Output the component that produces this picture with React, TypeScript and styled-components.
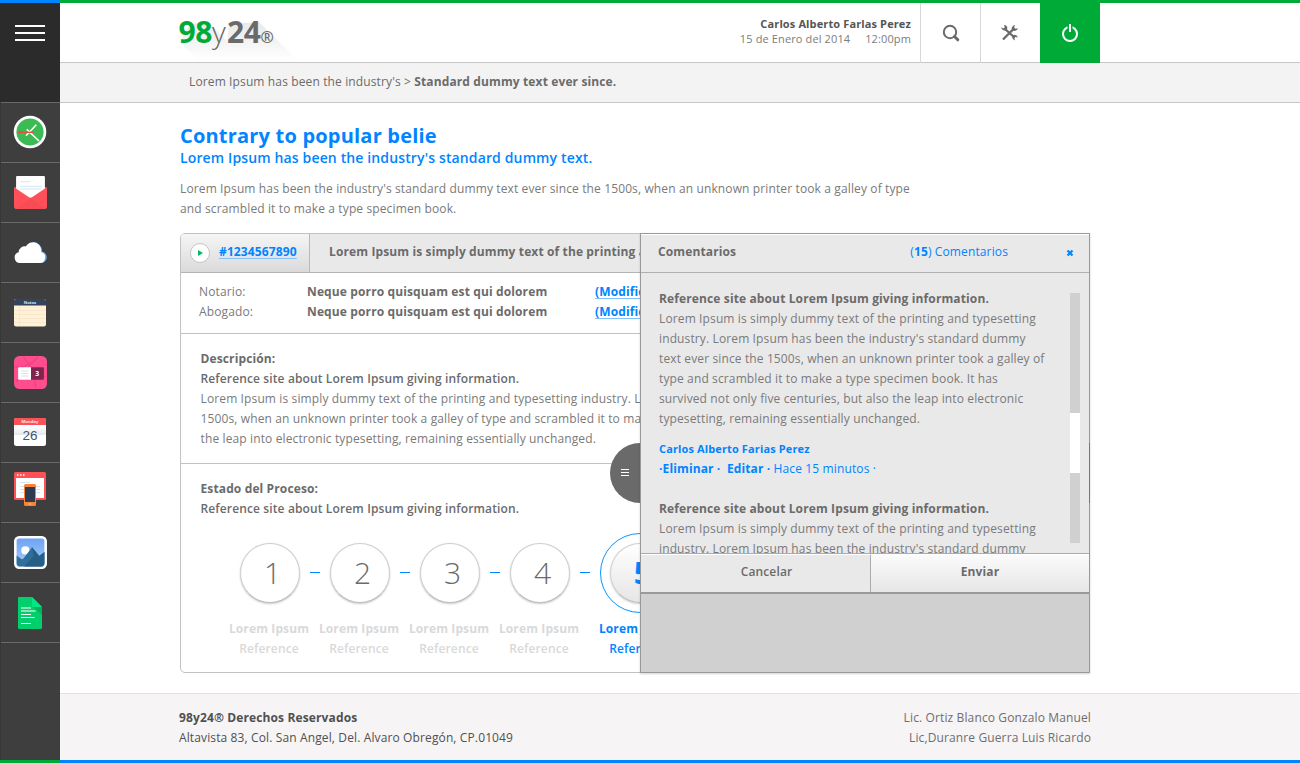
import React from "react";
import styled, { createGlobalStyle, css } from "styled-components";

const Global = createGlobalStyle`
  * { box-sizing: border-box; }
  body { margin: 0; font-family: "Open Sans", sans-serif; font-size: 12px; line-height: 20px; letter-spacing: 0.125px; color: #6b6b6b; background: #fff; }
  a { color: inherit; text-decoration: none; }
  h1, h2, p { margin: 0; }
`;

const blue = "#0084ff";
const green = "#00aa37";

const Shell = styled.div`
  display: flex;
  width: 1300px;
  height: 763px;
  overflow: hidden;
`;

const Sidebar = styled.nav`
  display: flex;
  flex-direction: column;
  flex: none;
  width: 60px;
  background: #3e3e3e;
  border-top: 3px solid ${blue};
  border-bottom: 3px solid ${green};
`;

const MenuButton = styled.button`
  display: flex;
  flex-direction: column;
  gap: 5px;
  height: 99px;
  padding: 22px 15px 0;
  border: 0;
  background: #2b2b2b;
`;

const MenuBar = styled.span`
  height: 2px;
  background: #fff;
`;

const SideItems = styled.div`
  display: flex;
  flex-direction: column;
  flex: 1;
  border-left: 1px solid #373737;
`;

const SideItem = styled.a<{ $top: number; $wide?: boolean }>`
  display: flex;
  align-items: flex-start;
  justify-content: center;
  height: 60px;
  padding: ${(p) => p.$top}px ${(p) => (p.$wide ? 0 : 1)}px 0 0;
  border-top: 1px solid #6a6a6a;
`;

const SideEnd = styled.span`
  height: 1px;
  background: #6a6a6a;
`;

const Page = styled.div`
  display: flex;
  flex-direction: column;
  flex: 1;
  border-top: 3px solid ${green};
  border-bottom: 3px solid ${blue};
`;

const TopBar = styled.header`
  display: flex;
  height: 60px;
  padding-left: 119px;
  border-bottom: 1px solid #c6c6c6;
`;

const Logo = styled.div`
  position: relative;
  display: flex;
  align-items: baseline;
  width: 240px;
  padding-top: 8px;
  font-size: 30px;
  line-height: 42px;
  font-weight: 700;
  letter-spacing: -0.4px;
  color: #6a6a6a;
  white-space: nowrap;
`;

const LogoShadow = styled.svg`
  position: absolute;
  left: 0;
  top: 0;
`;

const LogoText = styled.span<{ $kind?: "green" | "light" | "mark" }>`
  position: relative;
  ${(p) => p.$kind === "green" && css`margin-left: -0.5px; color: ${green};`}
  ${(p) => p.$kind === "light" && css`font-weight: 300; letter-spacing: 1.2px;`}
  ${(p) => p.$kind === "mark" && css`font-size: 16px; line-height: 20px; letter-spacing: 0; font-weight: 600;`}
`;

const User = styled.div`
  flex: none;
  width: 501px;
  padding: 13px 9px 0 0;
  text-align: right;
  font-size: 11px;
  line-height: 15px;
  color: #7c7c7c;
  white-space: pre;
`;

const UserName = styled.div`
  font-weight: 700;
  color: #555;
`;

const ToolButton = styled.button<{ $active?: boolean }>`
  display: flex;
  align-items: center;
  justify-content: center;
  width: 60px;
  height: 60px;
  padding: 0;
  border: 0;
  border-left: ${(p) => (p.$active ? "0" : "1px solid #d8d8d8")};
  background: ${(p) => (p.$active ? green : "transparent")};
`;

const Crumbs = styled.div`
  height: 40px;
  padding: 9px 0 0 129px;
  background: #f3f3f3;
  border-bottom: 1px solid #c6c6c6;
`;

const Main = styled.main`
  flex: 1;
  padding: 20px 0 0 120px;
`;

const Title = styled.h1`
  font-size: 20px;
  line-height: 26px;
  font-weight: 700;
  letter-spacing: 0.2px;
  color: ${blue};
`;

const Subtitle = styled.h2`
  font-size: 14px;
  line-height: 18px;
  font-weight: 600;
  letter-spacing: 0.135px;
  color: ${blue};
`;

const Intro = styled.p`
  margin-top: 12px;
  width: 760px;
  color: #7a7a7a;
`;

const Card = styled.section`
  position: relative;
  width: 910px;
  height: 440px;
  margin-top: 14px;
  border: 1px solid #c2c2c2;
  border-radius: 5px;
  white-space: nowrap;
`;

const CardHead = styled.div`
  display: flex;
  height: 39px;
  border-bottom: 1px solid #b5b5b5;
  background: #e9e9e9;
  border-radius: 4px 0 0 0;
  font-weight: 700;
`;

const Folio = styled.div`
  display: flex;
  gap: 9px;
  width: 129px;
  padding: 8px 0 0 9px;
  border-right: 1px solid #b9b9b9;
  border-radius: 4px 0 0 0;
  background: linear-gradient(#f5f5f5, #dadada);
`;

const Play = styled.span`
  display: flex;
  align-items: center;
  justify-content: center;
  width: 20px;
  height: 20px;
  margin-top: 1px;
  border: 1px solid #c4c4c4;
  border-radius: 50%;
  background: #fff;
`;

const Link = styled.a`
  color: ${blue};
  font-weight: 700;
  text-decoration: underline 1px #80c1ff;
  text-underline-offset: 2px;
  text-decoration-skip-ink: none;
`;

const CardTitle = styled.div`
  padding: 8px 0 0 19px;
`;

const People = styled.div`
  display: grid;
  grid-template-columns: 108px 288px auto;
  grid-auto-rows: 20px;
  height: 61px;
  padding: 9px 0 0 18px;
  border-bottom: 1px solid #c2c2c2;
  color: #7a7a7a;
`;

const Strong = styled.strong<{ $semi?: boolean }>`
  font-weight: ${(p) => (p.$semi ? 600 : 700)};
  color: #6b6b6b;
`;

const Block = styled.div`
  height: 130px;
  padding: 15px 0 0 19.5px;
  border-bottom: 1px solid #c2c2c2;
  color: #7a7a7a;
`;

const Process = styled.div`
  padding: 15px 0 0 19.5px;
`;

const Steps = styled.div`
  display: flex;
  padding: 14px 0 0 39.5px;
`;

const Step = styled.div<{ $active?: boolean }>`
  display: flex;
  flex-direction: column;
  align-items: center;
  width: ${(p) => (p.$active ? 80 : 60)}px;
  color: ${(p) => (p.$active ? blue : "#d9d9d9")};
`;

const StepLabel = styled.span<{ $bold?: boolean }>`
  padding-right: 2px;
  font-weight: ${(p) => (p.$bold ? 700 : 600)};
`;

const Ring = styled.div<{ $active?: boolean }>`
  display: flex;
  align-items: center;
  justify-content: center;
  width: 80px;
  height: 80px;
  margin-bottom: 6px;
  border: 1px solid ${(p) => (p.$active ? "#0a95ff" : "transparent")};
  border-radius: 50%;
`;

const Disc = styled.div<{ $active?: boolean }>`
  width: 60px;
  height: 60px;
  padding-left: 5px;
  border: 1px solid #cfcfcf;
  border-bottom-color: #bdbdbd;
  border-radius: 50%;
  box-shadow: 0 1px 2px rgba(0, 0, 0, 0.22);
  background: ${(p) => (p.$active ? "linear-gradient(#fff, #e6e6e6)" : "#fff")};
  color: ${(p) => (p.$active ? blue : "#6b6b6b")};
  font-size: 30px;
  line-height: 58px;
  font-weight: ${(p) => (p.$active ? 700 : 300)};
  text-align: center;
`;

const Dash = styled.span`
  width: 10px;
  height: 1px;
  margin: 39px 10px 0;
  background: ${blue};
`;

const Handle = styled.div`
  position: absolute;
  left: 429px;
  top: 209px;
  display: flex;
  flex-direction: column;
  justify-content: center;
  gap: 1px;
  width: 60px;
  height: 60px;
  padding-left: 11px;
  border-radius: 50%;
  background: #6a6a6a;
`;

const HandleBar = styled.span`
  width: 8px;
  height: 1px;
  margin-bottom: 1px;
  background: #fff;
`;

const Panel = styled.aside`
  position: absolute;
  left: 459px;
  top: -1px;
  display: flex;
  flex-direction: column;
  width: 450px;
  height: 440px;
  border: 1px solid #999;
  background: #d0d0d0;
  box-shadow: 0 1px 2px rgba(0, 0, 0, 0.18);

  &::after {
    content: "";
    position: absolute;
    right: -1px;
    top: 209px;
    width: 1px;
    height: 60px;
    background: #777;
  }
`;

const PanelHead = styled.div`
  display: flex;
  align-items: flex-start;
  height: 39px;
  padding: 7px 15px 0 17px;
  border-top: 1px solid #fff;
  border-bottom: 1px solid #b0b0b0;
  background: #e9e9e9;
`;

const CloseIcon = styled.svg`
  margin-top: 7px;
`;

const Count = styled.span`
  margin-left: auto;
  margin-right: 58px;
  color: ${blue};
`;

const PanelBody = styled.div`
  display: flex;
  justify-content: space-between;
  height: 280px;
  padding: 16px 9px 0 18px;
  overflow: hidden;
  background: #e9e9e9;
  color: #7a7a7a;
`;

const Comment = styled.article`
  height: 210px;
`;

const Meta = styled.div`
  margin-top: 10px;
  color: ${blue};
  white-space: pre;
`;

const Author = styled.div`
  font-size: 11px;
  font-weight: 700;
`;

const Track = styled.div`
  width: 10px;
  height: 250px;
  margin-top: 4px;
  padding-top: 120px;
  background: #d0d0d0;
`;

const Thumb = styled.div`
  height: 60px;
  background: #fff;
`;

const Actions = styled.div`
  display: flex;
  height: 41px;
  border-top: 1px solid #ababab;
  border-bottom: 2px solid #9a9a9a;
`;

const Action = styled.button<{ $primary?: boolean }>`
  width: ${(p) => (p.$primary ? 219 : 229)}px;
  padding: 0 0 4px ${(p) => (p.$primary ? 0 : 22)}px;
  border: 0;
  border-top: 1px solid #fff;
  border-left: ${(p) => (p.$primary ? "1px solid #ababab" : "0")};
  background: ${(p) => (p.$primary ? "linear-gradient(#fbfbfb, #e6e6e6)" : "#e9e9e9")};
  color: #6b6b6b;
  font: ${(p) => (p.$primary ? 700 : 600)} 12px "Open Sans", sans-serif;
  letter-spacing: 0.125px;
`;

const Footer = styled.footer`
  display: flex;
  justify-content: space-between;
  height: 67px;
  padding: 14px 209px 0 119px;
  border-top: 1px solid #e2e2e2;
  background: #f6f4f5;
`;

const FooterSide = styled.div<{ $right?: boolean }>`
  text-align: ${(p) => (p.$right ? "right" : "left")};
  color: ${(p) => (p.$right ? "#6e6e6e" : "#505050")};
`;

const ClockIcon = () => (
  <svg width="34" height="34" viewBox="0 0 34 34">
    <circle cx="17" cy="17" r="16.3" fill="#fff" />
    <circle cx="17" cy="17" r="13.6" fill="#3cba54" />
    <path d="M13 20.700L23.300 9.700M13.700 14.300L26 26" stroke="#fff" strokeWidth="1.600" />
    <path d="M6 17.300H20.500" stroke="#e0523c" strokeWidth="1.400" />
    <circle cx="6.500" cy="17.300" r="1.600" fill="#e8503a" />
  </svg>
);

const MailIcon = () => (
  <svg width="35" height="35" viewBox="0 0 34 34">
    <path d="M1 12l5-1h23l4 1v18q0 3-3 3H4q-3 0-3-3z" fill="#e9404a" />
    <path d="M3 2q0-1 1-1h26q1 0 1 1v20H3z" fill="#fff" />
    <path d="M7 6.500h10M7 11h21M7 13.500h21" stroke="#d5e6f3" strokeWidth="1" />
    <path d="M1 12l16 10.500L33 12v18q0 3-3 3H4q-3 0-3-3z" fill="#ff5059" />
    <path d="M17 22.500L33 33H4z" fill="#f4454f" opacity=".5" />
  </svg>
);

const CloudIcon = () => (
  <svg width="34" height="24" viewBox="0 0 34 24">
    <path d="M20 1a9 9 0 0 1 9 9.500 5.800 5.800 0 0 1-1 11.500H14z" fill="#6aabf7" />
    <path d="M7 22a5.500 5.500 0 0 1-1.300-10.800A6 6 0 0 1 13.500 5.500 8.500 8.500 0 0 1 28 11 5.600 5.600 0 0 1 26.500 22z" fill="#fff" />
    <circle cx="20" cy="9.500" r="8.300" fill="#fff" />
  </svg>
);

const NotesIcon = () => (
  <svg width="34" height="30" viewBox="0 0 34 30">
    <rect x="1" y="1" width="32" height="27.500" rx="2" fill="#fff0d6" />
    <path d="M1 7V3q0-2 2-2h28q2 0 2 2v4z" fill="#34445f" />
    <path d="M1 7.500h32" stroke="#c98b5b" />
    <path d="M1 12.500h32M1 16.500h32M1 20.500h32M1 24.500h32M6.500 8v20" stroke="#f3e2c6" strokeWidth=".7" />
    <text x="17" y="5.600" fontSize="4.200" fontWeight="700" letterSpacing="0" textAnchor="middle" fill="#dfe5ee">Notes</text>
  </svg>
);

const BallIcon = () => (
  <svg width="35" height="35" viewBox="0 0 34 34">
    <rect x="1" y="1" width="32" height="32" rx="5" fill="#ff4d8d" />
    <path d="M2 12q15 0 22-10M10 2q12 12 12 30M3 26q12-12 29-5" fill="none" stroke="#ee4282" strokeWidth="1.200" />
    <rect x="5" y="12" width="13" height="12" rx="1" fill="#fff" />
    <path d="M8 15.500h7M8 18h7M8 20.500h7" stroke="#e0e0e0" />
    <path d="M17.500 12H29q1 0 1 1v10q0 1-1 1H17.500z" fill="#7d2450" />
    <text x="23.500" y="20.500" fontSize="6.500" fontWeight="700" letterSpacing="0" textAnchor="middle" fill="#fff">3</text>
  </svg>
);

const CalendarIcon = () => (
  <svg width="34" height="30" viewBox="0 0 34 30">
    <defs>
      <linearGradient id="cal" x2="0" y2="1">
        <stop offset="0" stopColor="#fff" />
        <stop offset=".3" stopColor="#fff" />
        <stop offset=".6" stopColor="#e6e8eb" />
        <stop offset=".62" stopColor="#fff" />
      </linearGradient>
    </defs>
    <rect x="1" y="1" width="32" height="28" rx="2.500" fill="url(#cal)" />
    <path d="M1 8V3q0-2 2-2h28q2 0 2 2v5z" fill="#fb5258" />
    <text x="17" y="6.200" fontSize="4.200" fontWeight="700" letterSpacing="0" textAnchor="middle" fill="#ffe3e3">Monday</text>
    <text x="17" y="22.800" fontSize="13.500" fontFamily="Liberation Sans" letterSpacing="0" textAnchor="middle" fill="#44546c">26</text>
  </svg>
);

const BrowserIcon = () => (
  <svg width="34" height="36" viewBox="0 0 34 36">
    <rect x="1" y="1" width="32" height="28" rx="1.500" fill="#fb5258" />
    <path d="M3 7h28v20H3z" fill="#fff" />
    <path d="M4 4h1.500M7 4h1.500M10 4h1.500" stroke="#fff" strokeWidth="1.500" />
    <path d="M7 11.500h10M7 15.500h20M7 18.500h20M7 21.500h20" stroke="#d2e4f3" />
    <rect x="11" y="13" width="12" height="22" rx="1.500" fill="#fb8335" />
    <path d="M12 16h10v15H12z" fill="#2d3b50" />
    <circle cx="17" cy="33" r=".8" fill="#ffd3b3" />
  </svg>
);

const PhotoIcon = () => (
  <svg width="35" height="35" viewBox="0 0 34 34">
    <defs>
      <linearGradient id="sky" x2="0" y2="1">
        <stop offset="0" stopColor="#6ea4f4" />
        <stop offset="1" stopColor="#a9cbfa" />
      </linearGradient>
    </defs>
    <rect x="1" y="1" width="32" height="32" rx="5" fill="#fff" />
    <rect x="3.500" y="3.500" width="27" height="27" rx="2.500" fill="url(#sky)" />
    <circle cx="12" cy="15" r="4" fill="#fff" />
    <path d="M3.500 20l5 3.500 1.500-.5 8.500-11 7 8.500 5-4v11q0 3-3 3h-21q-3 0-3-3z" fill="#2f6f99" />
    <path d="M18.500 12l7 8.500 5-4v11q0 3-3 3H11l9-10z" fill="#265f86" />
  </svg>
);

const DocIcon = () => (
  <svg width="24" height="32" viewBox="0 0 24 32">
    <path d="M0 1q0-1 1-1h13l10 10v21q0 1-1 1H1q-1 0-1-1z" fill="#00cf6b" />
    <path d="M15 10h9v8z" fill="#00b45c" />
    <path d="M14 0l10 10H15q-1 0-1-1z" fill="#00e884" />
    <path d="M3 11h10M3 14h14.500M3 17.500h10M3 20.500h13.500M3 26.500h10" stroke="#fff" strokeWidth="1.100" />
  </svg>
);

const sideIcons = [
  { Icon: ClockIcon, top: 12 },
  { Icon: MailIcon, top: 12, wide: true },
  { Icon: CloudIcon, top: 18 },
  { Icon: NotesIcon, top: 15 },
  { Icon: BallIcon, top: 12, wide: true },
  { Icon: CalendarIcon, top: 14 },
  { Icon: BrowserIcon, top: 8 },
  { Icon: PhotoIcon, top: 12, wide: true },
  { Icon: DocIcon, top: 14 },
];

const SearchIcon = () => (
  <svg width="18" height="18" viewBox="0 0 18 18" fill="none" stroke="#6a6a6a">
    <circle cx="8" cy="8" r="6.200" strokeWidth="2" />
    <path d="M12.500 12.500l3.300 3.300" strokeWidth="3" strokeLinecap="round" />
  </svg>
);

const ToolsIcon = () => (
  <svg width="21" height="18" viewBox="0 0 21 18">
    <path d="M5 5l9.500 8.500M14 4.500L3 15.500" stroke="#6a6a6a" strokeWidth="2.300" />
    <path d="M4 1q3 .2 3.300 2.500L7 6 4.800 6.500Q1.600 6 1.200 3.200l2 1.300 1.600-1.200zM15.300 1L14 3.200l1.500 1.600 2.300-.6q-.6 2.800-3.300 2.700L12 6.300l-.4-2.300Q12.500 1.200 15.300 1zM15 10.700q2.600.4 2.700 3l-1.800-1-1.500 1.300.6 2.500q-2.700-.6-2.800-3.200l.5-2z" fill="#6a6a6a" />
  </svg>
);

const PowerIcon = () => (
  <svg width="18" height="20" viewBox="0 0 18 20" fill="none" stroke="#fff" strokeWidth="2">
    <circle cx="9" cy="11" r="7" />
    <path d="M9 1v8" stroke={green} strokeWidth="5" />
    <path d="M9 1v8" />
  </svg>
);

export default function App() {
  return (
    <Shell>
      <Global />
      <Sidebar>
        <MenuButton aria-label="Menu"><MenuBar /><MenuBar /><MenuBar /></MenuButton>
        <SideItems>
          {sideIcons.map(({ Icon, top, wide }, i) => <SideItem key={i} $top={top} $wide={wide}><Icon /></SideItem>)}
          <SideEnd />
        </SideItems>
      </Sidebar>
      <Page>
        <TopBar>
          <Logo>
            <LogoShadow width="130" height="59">
              <defs>
                <linearGradient id="fade" x2="0" y2="1">
                  <stop offset="0" stopColor="#e9e9e9" />
                  <stop offset="0.500" stopColor="#f3f3f3" />
                  <stop offset="1" stopColor="#fff" />
                </linearGradient>
              </defs>
              <path d="M1 39L11 21L29 19L48 38L50 21L80 19L118 57H19z" fill="url(#fade)" />
            </LogoShadow>
            <LogoText $kind="green">98</LogoText>
            <LogoText $kind="light">y</LogoText>
            <LogoText>24</LogoText>
            <LogoText $kind="mark">®</LogoText>
          </Logo>
          <User>
            <UserName>Carlos Alberto Farlas Perez</UserName>
            {"15 de Enero del 2014     12:00pm"}
          </User>
          <ToolButton aria-label="Buscar"><SearchIcon /></ToolButton>
          <ToolButton aria-label="Herramientas"><ToolsIcon /></ToolButton>
          <ToolButton aria-label="Salir" $active><PowerIcon /></ToolButton>
        </TopBar>
        <Crumbs>Lorem Ipsum has been the industry's &gt; <Strong>Standard dummy text ever since.</Strong></Crumbs>
        <Main>
          <Title>Contrary to popular belie</Title>
          <Subtitle>Lorem Ipsum has been the industry's standard dummy text.</Subtitle>
          <Intro>
            Lorem Ipsum has been the industry's standard dummy text ever since the 1500s, when an unknown printer took a galley of type<br />
            and scrambled it to make a type specimen book.
          </Intro>
          <Card>
            <CardHead>
              <Folio>
                <Play><svg width="5" height="6"><path d="M0 0l5 3-5 3z" fill="#00b86b" /></svg></Play>
                <Link>#1234567890</Link>
              </Folio>
              <CardTitle>Lorem Ipsum is simply dummy text of the printing and</CardTitle>
            </CardHead>
            <People>
              <span>Notario:</span><Strong>Neque porro quisquam est qui dolorem</Strong><span><Link>(Modificar)</Link></span>
              <span>Abogado:</span><Strong>Neque porro quisquam est qui dolorem</Strong><span><Link>(Modificar)</Link></span>
            </People>
            <Block>
              <Strong>Descripción:</Strong><br />
              <Strong $semi>Reference site about Lorem Ipsum giving information.</Strong><br />
              Lorem Ipsum is simply dummy text of the printing and typesetting industry. Lorem<br />
              1500s, when an unknown printer took a galley of type and scrambled it to make<br />
              the leap into electronic typesetting, remaining essentially unchanged.
            </Block>
            <Process>
              <Strong>Estado del Proceso:</Strong><br />
              <Strong $semi>Reference site about Lorem Ipsum giving information.</Strong>
              <Steps>
                {[1, 2, 3, 4, 5].map((n) => (
                  <React.Fragment key={n}>
                    {n > 1 && <Dash />}
                    <Step $active={n === 5}>
                      <Ring $active={n === 5}><Disc $active={n === 5}>{n}</Disc></Ring>
                      <StepLabel $bold>Lorem Ipsum</StepLabel>
                      <StepLabel>Reference</StepLabel>
                    </Step>
                  </React.Fragment>
                ))}
              </Steps>
            </Process>
            <Handle><HandleBar /><HandleBar /><HandleBar /></Handle>
            <Panel>
              <PanelHead>
                <Strong>Comentarios</Strong>
                <Count>(<b>15</b>) Comentarios</Count>
                <CloseIcon width="8" height="8" viewBox="0 0 8 8"><path d="M1.500 1.500l5 5M6.500 1.500l-5 5" stroke={blue} strokeWidth="2.200" /></CloseIcon>
              </PanelHead>
              <PanelBody>
                <div>
                  <Comment>
                    <Strong>Reference site about Lorem Ipsum giving information.</Strong><br />
                    Lorem Ipsum is simply dummy text of the printing and typesetting<br />
                    industry. Lorem Ipsum has been the industry's standard dummy<br />
                    text ever since the 1500s, when an unknown printer took a galley of<br />
                    type and scrambled it to make a type specimen book. It has<br />
                    survived not only five centuries, but also the leap into electronic<br />
                    typesetting, remaining essentially unchanged.
                    <Meta>
                      <Author>Carlos Alberto Farias Perez</Author>
                      <b>·Eliminar ·  Editar ·</b> Hace 15 minutos ·
                    </Meta>
                  </Comment>
                  <Comment>
                    <Strong>Reference site about Lorem Ipsum giving information.</Strong><br />
                    Lorem Ipsum is simply dummy text of the printing and typesetting<br />
                    industry. Lorem Ipsum has been the industry's standard dummy
                  </Comment>
                </div>
                <Track><Thumb /></Track>
              </PanelBody>
              <Actions>
                <Action>Cancelar</Action>
                <Action $primary>Enviar</Action>
              </Actions>
            </Panel>
          </Card>
        </Main>
        <Footer>
          <FooterSide><b>98y24® Derechos Reservados</b><br />Altavista 83, Col. San Angel, Del. Alvaro Obregón, CP.01049</FooterSide>
          <FooterSide $right>Lic. Ortiz Blanco Gonzalo Manuel<br />Lic,Duranre Guerra Luis Ricardo</FooterSide>
        </Footer>
      </Page>
    </Shell>
  );
}
